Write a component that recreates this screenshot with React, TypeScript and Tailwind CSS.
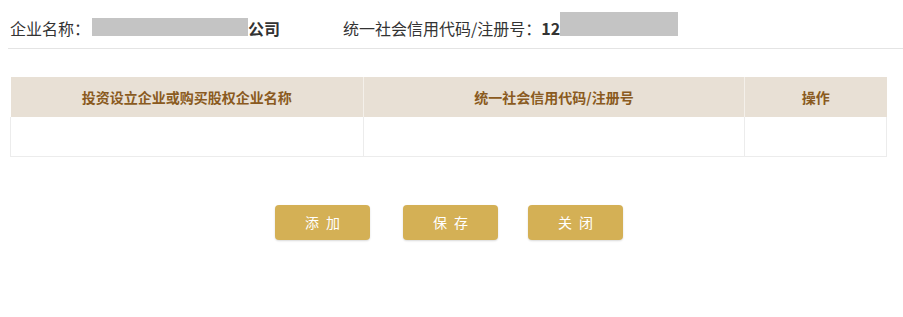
const font = "font-['Microsoft_YaHei','Noto_Sans_CJK_SC',sans-serif]";

const btnClass =
  "flex h-[35px] w-[95px] items-center justify-center rounded-[4px] bg-[#d4b055] text-[14px] tracking-[0.5em] indent-[0.5em] text-white shadow-[0_1px_2px_rgba(0,0,0,0.15)]";

export default function App() {
  return (
    <div className={`h-[317px] w-[903px] bg-white ${font}`}>
      {/* 企业信息 */}
      <div className="ml-[8px] flex h-[49px] items-center border-b border-[#e4e4e4] pl-[2px] pt-[8px] text-[16px] text-[#333]">
        <div className="flex items-center">
          <span>企业名称：</span>
          <span className="ml-[2px] -mt-[3px] h-[18px] w-[156px] bg-[#c4c4c4]" />
          <span className="font-bold">公司</span>
        </div>
        <div className="ml-[63px] flex items-center">
          <span>统一社会信用代码/注册号：</span>
          <span className="font-bold">12</span>
          <span className="-mt-[9px] h-[24px] w-[118px] bg-[#c4c4c4]" />
        </div>
      </div>

      {/* 列表 */}
      <table className="ml-[10px] mt-[28px] w-[877px] border-collapse text-[14px]">
        <thead>
          <tr className="h-[40px] bg-[#e8e0d5] font-bold text-[#8a5a20]">
            <th className="w-[353px] border-r border-[#f4f0ea]">投资设立企业或购买股权企业名称</th>
            <th className="w-[381px] border-r border-[#f4f0ea]">统一社会信用代码/注册号</th>
            <th>操作</th>
          </tr>
        </thead>
        <tbody>
          <tr className="h-[39px]">
            <td className="border border-t-0 border-[#ececec]" />
            <td className="border border-t-0 border-[#ececec]" />
            <td className="border border-t-0 border-[#ececec]" />
          </tr>
        </tbody>
      </table>

      {/* 操作按钮 */}
      <div className="mt-[48px] flex pl-[275px]">
        <button className={btnClass}>添加</button>
        <button className={`${btnClass} ml-[33px]`}>保存</button>
        <button className={`${btnClass} ml-[30px]`}>关闭</button>
      </div>
    </div>
  );
}
